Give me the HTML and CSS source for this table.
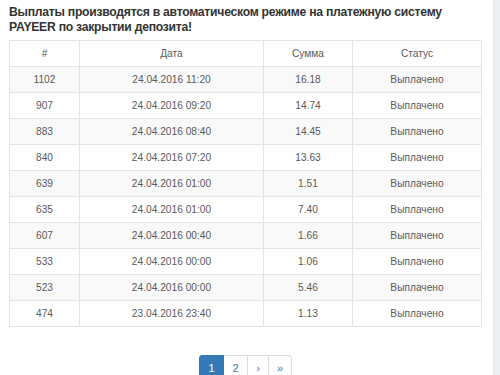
FILE: index.html
```html
<!DOCTYPE html>
<html lang="ru">
<head>
<meta charset="utf-8">
<link rel="stylesheet" href="styles.css">
</head>
<body>
<div class="page">
  <main class="content">
    <h4 class="title">Выплаты производятся в автоматическом режиме на платежную систему PAYEER по закрытии депозита!</h4>
    <table class="payouts">
      <thead>
        <tr><th class="c-id">#</th><th class="c-date">Дата</th><th class="c-sum">Сумма</th><th>Статус</th></tr>
      </thead>
      <tbody>
        <tr><td>1102</td><td>24.04.2016 11:20</td><td>16.18</td><td>Выплачено</td></tr>
        <tr><td>907</td><td>24.04.2016 09:20</td><td>14.74</td><td>Выплачено</td></tr>
        <tr><td>883</td><td>24.04.2016 08:40</td><td>14.45</td><td>Выплачено</td></tr>
        <tr><td>840</td><td>24.04.2016 07:20</td><td>13.63</td><td>Выплачено</td></tr>
        <tr><td>639</td><td>24.04.2016 01:00</td><td>1.51</td><td>Выплачено</td></tr>
        <tr><td>635</td><td>24.04.2016 01:00</td><td>7.40</td><td>Выплачено</td></tr>
        <tr><td>607</td><td>24.04.2016 00:40</td><td>1.66</td><td>Выплачено</td></tr>
        <tr><td>533</td><td>24.04.2016 00:00</td><td>1.06</td><td>Выплачено</td></tr>
        <tr><td>523</td><td>24.04.2016 00:00</td><td>5.46</td><td>Выплачено</td></tr>
        <tr><td>474</td><td>23.04.2016 23:40</td><td>1.13</td><td>Выплачено</td></tr>
      </tbody>
    </table>
    <nav class="pager">
      <ul class="pagination">
        <li class="active"><span>1</span></li>
        <li><a href="#">2</a></li>
        <li><a href="#">›</a></li>
        <li><a href="#">»</a></li>
      </ul>
    </nav>
  </main>
  <div class="sidebar"></div>
</div>
</body>
</html>
```
FILE: styles.css
```css
html, body {
  margin: 0;
  padding: 0;
  height: 100%;
  background: #fff;
}
body {
  font-family: "Liberation Sans", Arial, sans-serif;
  color: #5a5a5a;
  overflow: hidden;
}
.page {
  display: flex;
  height: 375px;
}
.content {
  flex: 0 0 493px;
  box-sizing: border-box;
  padding: 5px 11px 0 9px;
}
.sidebar {
  flex: 1;
  background: #edeff3;
  border-left: 1px solid #e3e5ea;
}
.title {
  margin: 0;
  font-size: 12.2px;
  line-height: 15px;
  letter-spacing: -0.26px;
  font-weight: bold;
  color: #333;
}
.payouts {
  margin-top: 5px;
  width: 473px;
  border-collapse: collapse;
  font-size: 10.2px;
}
.payouts th, .payouts td {
  border: 1px solid #e4e4e4;
  height: 25px;
  padding: 0;
  text-align: center;
  font-weight: normal;
  vertical-align: middle;
}
.c-id { width: 69px; }
.c-date { width: 183px; }
.c-sum { width: 88px; }
.payouts tbody tr:nth-child(odd) { background: #f9f9f9; }
.pager {
  display: flex;
  justify-content: center;
  margin-top: 28px;
}
.pagination {
  display: flex;
  list-style: none;
  margin: 0;
  padding: 0;
  font-size: 11px;
}
.pagination li a, .pagination li span {
  display: block;
  height: 24px;
  line-height: 24px;
  text-align: center;
  color: #337ab7;
  text-decoration: none;
  border: 1px solid #ddd;
  margin-left: -1px;
  background: #fff;
}
.pagination li:nth-child(1) span { width: 23px; border-radius: 3px 0 0 3px; margin-left: 0; }
.pagination li:nth-child(2) a { width: 23px; }
.pagination li:nth-child(3) a { width: 20px; }
.pagination li:nth-child(4) a { width: 22px; border-radius: 0 3px 3px 0; }
.pagination li.active span {
  background: #337ab7;
  border-color: #337ab7;
  color: #fff;
  position: relative;
  z-index: 1;
}
```
